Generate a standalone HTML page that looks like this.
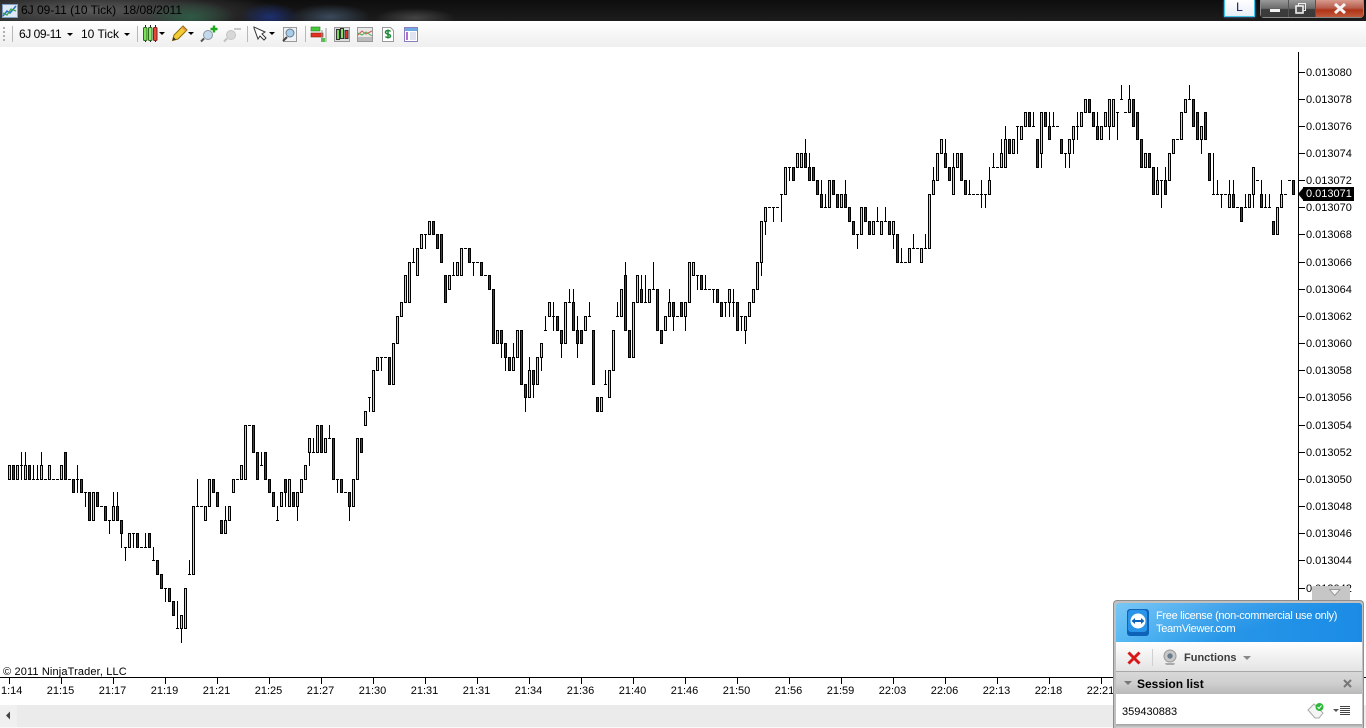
<!DOCTYPE html>
<html><head><meta charset="utf-8"><title>6J 09-11 (10 Tick)</title>
<style>
html,body{margin:0;padding:0;width:1366px;height:728px;overflow:hidden;background:#fff;font-family:"Liberation Sans",sans-serif;color:#000}
.a{position:absolute;white-space:nowrap}
#title{left:0;top:0;width:1366px;height:21px;background:
radial-gradient(ellipse 45px 16px at 190px 17px,#2f5a45 0,rgba(47,90,69,0) 100%),
radial-gradient(ellipse 30px 14px at 270px 17px,#1d2f70 0,rgba(29,47,112,0) 100%),
radial-gradient(ellipse 40px 13px at 330px 17px,#3a4a5c 0,rgba(58,74,92,0) 100%),
radial-gradient(ellipse 40px 10px at 415px 18px,#444 0,rgba(68,68,68,0) 100%),
radial-gradient(ellipse 190px 24px at 90px 10px,#5a5a5a 0,rgba(90,90,90,0) 100%),
linear-gradient(#0e0e0e,#1c1c1c)}
#tb{left:0;top:22px;width:1366px;height:25px;background:linear-gradient(#ffffff,#f6f6f6 50%,#efefef)}
.t12{font-size:12px;line-height:14px}
.t11{font-size:11px;line-height:13px}
.sep{position:absolute;top:26px;width:1px;height:16px;background:#b8b8b8}
.ar{position:absolute;width:0;height:0;border-left:3px solid transparent;border-right:3px solid transparent;border-top:3px solid #000}
</style></head><body>
<div class="a" id="title"></div>
<div class="a" style="left:0;top:21px;width:1366px;height:1px;background:#fff"></div>
<svg class="a" style="left:2px;top:4px" width="17" height="15" viewBox="0 0 17 15"><rect x=".5" y=".5" width="15" height="13" fill="#dfe9f5" stroke="#7f9dc0"/><path d="M1 12 5 7 8 9 14 2" fill="none" stroke="#2a6fd0" stroke-width="1.5"/><path d="M1 9 5 11 9 5 14 7" fill="none" stroke="#3aa84a" stroke-width="1.3"/></svg>
<div class="a t12" style="left:21px;top:3px;color:#000">6J 09-11 (10 Tick)&nbsp; 18/08/2011</div>

<div class="a" style="left:1224px;top:0;width:31px;height:17px;box-sizing:border-box;background:linear-gradient(#fff,#e8eef6);border:1px solid #3fc4e8;border-top:0;box-shadow:0 0 2px #7a8ad8;text-align:center;font-size:12px;line-height:15px;color:#101060">L</div>
<div class="a" style="left:1260px;top:0;width:104px;height:18px;box-sizing:border-box;border:1px solid #8a8a8a;border-top:0;border-radius:0 0 4px 4px;background:#555"></div>
<div class="a" style="left:1261px;top:0;width:27px;height:17px;background:linear-gradient(#9a9a9a,#6a6a6a 50%,#3c3c3c 55%,#3a3a3a)"></div>
<div class="a" style="left:1289px;top:0;width:26px;height:17px;background:linear-gradient(#9a9a9a,#6a6a6a 50%,#3c3c3c 55%,#3a3a3a)"></div>
<div class="a" style="left:1316px;top:0;width:47px;height:17px;background:linear-gradient(#d89a8c,#b86050 45%,#b03418 60%,#c05a3c)"></div>
<div class="a" style="left:1270px;top:9px;width:10px;height:3px;background:#f2f2f2"></div>
<svg class="a" style="left:1295px;top:3px" width="13" height="11" viewBox="0 0 13 11"><rect x="3.5" y=".5" width="7" height="7" fill="none" stroke="#eee"/><rect x="1" y="3" width="7" height="7" fill="#555" stroke="#eee" stroke-width="1.6"/></svg>
<svg class="a" style="left:1333px;top:3px" width="14" height="11" viewBox="0 0 14 11"><path d="M2 1 12 10M12 1 2 10" stroke="#f4f4f4" stroke-width="3" fill="none"/></svg>

<div class="a" id="tb"></div>
<div class="a" style="left:3px;top:27px;width:2px;height:14px;background:repeating-linear-gradient(#b0b0b0 0 2px,transparent 2px 4px)"></div>
<div class="sep" style="left:12px"></div>
<div class="a t12" style="left:19px;top:27px;letter-spacing:-.45px">6J 09-11</div><div class="ar" style="left:67px;top:33px"></div>
<div class="a t12" style="left:81px;top:27px">10 Tick</div><div class="ar" style="left:124px;top:33px"></div>
<div class="sep" style="left:137px"></div>
<div class="sep" style="left:247px"></div>
<div class="sep" style="left:305px"></div>
<svg class="a" style="left:0;top:22px" width="430" height="24" viewBox="0 22 430 24">
<path d="M145.500 25v17M150.500 25v17M155.500 25v17" stroke="#222"/>
<rect x="143.500" y="27.500" width="3.500" height="13" rx="1" fill="#7ee05a" stroke="#2a6a20"/><rect x="148.500" y="27.500" width="3.500" height="13" rx="1" fill="#90e868" stroke="#2a6a20"/><rect x="153.500" y="27.500" width="3.500" height="13" rx="1" fill="#e84838" stroke="#7a2018"/>
<path d="M159 32h6l-3 3z" fill="#000"/>
<path d="M172.500 40.500l1.500-5.500 9-9 4 4-9 9z" fill="#f4cc30" stroke="#8a6a10"/><path d="M172.500 40.500l1-3.500 2.500 2.500z" fill="#333"/><path d="M182 27l4 4" stroke="#e89050" stroke-width="1.500"/>
<path d="M188 32h6l-3 3z" fill="#000"/>
<circle cx="208" cy="35" r="4.500" fill="#c4d8ec" stroke="#8a96a4"/><path d="M204 38.500l-3 3" stroke="#555" stroke-width="2"/><path d="M210.500 29h7M214 25.500v7" stroke="#1ea81e" stroke-width="2.400"/>
<circle cx="231" cy="35" r="4.500" fill="#d8d8d8" stroke="#c4c4c4"/><path d="M227 38.500l-3 3" stroke="#c0c0c0" stroke-width="2"/><path d="M234 29h7" stroke="#c8c8c8" stroke-width="2"/>
<path d="M254 27v1l4 11 2-3 4 4 2-2-4-4 3-2z" fill="#fff" stroke="#333"/>
<path d="M269 32h6l-3 3z" fill="#000"/>
<rect x="283.500" y="27.500" width="13" height="14" fill="#eef2f6" stroke="#9a9a9a"/><circle cx="290" cy="33" r="4" fill="#a8cdea" stroke="#6a7a8a"/><path d="M287 37l-4 4" stroke="#444" stroke-width="2"/>
<rect x="311" y="27" width="9" height="4" fill="#46c83a" stroke="#2a7a20" stroke-width=".6"/><rect x="311" y="33" width="12" height="4" fill="#e03020" stroke="#8a2010" stroke-width=".6"/><rect x="321" y="38" width="4" height="4" fill="#46c83a"/><path d="M322 30v12M326 28v14" stroke="#999"/>
<rect x="334.500" y="27.500" width="15" height="14" fill="#ddd" stroke="#999"/><rect x="336.500" y="29.500" width="3" height="10" fill="#78d85c" stroke="#333"/><rect x="340.500" y="28.500" width="3" height="10" fill="#88e068" stroke="#333"/><rect x="345" y="30.500" width="3" height="8" fill="#e03828" stroke="#333"/>
<rect x="357.500" y="27.500" width="15" height="14" fill="#e8e8e8" stroke="#999"/><path d="M358 37h14v4h-14z" fill="#bbb"/><path d="M358 35l4-4 4 3 6-3" fill="none" stroke="#e05050"/><path d="M358 33l4 2 4-3 6 4" fill="none" stroke="#50b050"/>
<path d="M382.500 27.500h8l3 3v11h-11z" fill="#fff" stroke="#999"/><path d="M390.500 31.500c-1-1.500-5-1.500-5 .7 0 2.500 5 1.300 5 3.800 0 2-4 2-5 .5M388 29.500v9" fill="none" stroke="#1e8a3a" stroke-width="1.500"/>
<rect x="404.500" y="27.500" width="13" height="14" fill="#fff" stroke="#8a80c0"/><rect x="405" y="28" width="12" height="3" fill="#70a8e0"/><rect x="406" y="32" width="2" height="8" fill="#b070d0"/><path d="M410 33h6M410 35h6M410 37h6M410 39h6" stroke="#c0c8e0"/>
</svg>

<svg class="a" id="ch" style="left:0;top:46px" width="1366" height="660" viewBox="0 46 1366 660" shape-rendering="crispEdges"></svg>

<div class="a t11" style="left:3px;top:666px;letter-spacing:.14px">© 2011 NinjaTrader, LLC</div>
<div id="lbl"></div>

<div class="a" style="left:1303px;top:187px;width:51px;height:14px;background:#000;color:#fff;font-size:11px;line-height:15px;padding-left:3px;box-sizing:border-box">0.013071</div>
<svg class="a" style="left:1298px;top:187px" width="6" height="14"><path d="M6 0V14L0 7z" fill="#000"/></svg>

<div class="a" style="left:0;top:705px;width:1366px;height:22px;background:#ebebeb"></div>
<div class="a" style="left:0;top:727px;width:1366px;height:1px;background:#f8f8f8"></div>
<div class="a" style="left:0;top:705px;width:17px;height:22px;background:#f0f0f0"></div>
<svg class="a" style="left:5px;top:711px" width="6" height="9"><path d="M5 .5V8.500L1 4.500z" fill="#444"/></svg>

<div class="a" style="left:1312px;top:586px;width:38px;height:15px;background:#c6c6c6;border-radius:2px 2px 0 0"></div>
<svg class="a" style="left:1329px;top:589px" width="12" height="8"><path d="M.5 .5H11L5.700 6.500z" fill="#f4f4f4" stroke="#9a9a9a"/></svg>

<div class="a" style="left:1113px;top:600px;width:251px;height:128px;box-sizing:border-box;background:#c0c0c0;border:1px solid #8e8e8e;border-bottom:0;border-radius:4px 4px 0 0"></div>
<div class="a" style="left:1116px;top:603px;width:246px;height:39px;border-radius:3px 3px 0 0;background:
linear-gradient(165deg,rgba(255,255,255,.28) 0,rgba(255,255,255,.06) 45%,rgba(255,255,255,0) 60%),linear-gradient(90deg,#45b2f2,#2796e8 45%,#1b8ce6)"></div>
<svg class="a" style="left:1126px;top:608px" width="24" height="29" viewBox="0 0 24 29"><rect x="1" y="1" width="22" height="27" rx="3" fill="#0e62b8"/><rect x="2" y="2" width="19" height="22" rx="3" fill="#2a94e8"/><circle cx="12" cy="13" r="7.500" fill="#fff"/><path d="M5.500 13l3.500-3v2h6v-2l3.500 3-3.500 3v-2H9v2z" fill="#0e62b8"/></svg>
<div class="a" style="left:1156px;top:610px;font-size:11px;line-height:13px;color:#fff;letter-spacing:-.3px">Free license (non-commercial use only)<br>TeamViewer.com</div>
<div class="a" style="left:1116px;top:642px;width:246px;height:29px;background:linear-gradient(#fff,#f4f4f4 40%,#e4e4e4)"></div>
<div class="a" style="left:1116px;top:671px;width:246px;height:1px;background:#a8a8a8"></div>
<svg class="a" style="left:1127px;top:651px" width="14" height="14"><path d="M1.500 1.500 12.500 12.500M12.500 1.500 1.500 12.500" stroke="#d81818" stroke-width="3"/></svg>
<div class="a" style="left:1152px;top:649px;width:1px;height:17px;background:#d0d0d0"></div>
<svg class="a" style="left:1163px;top:649px" width="14" height="16"><circle cx="7" cy="7" r="6" fill="#c8c8c8" stroke="#999"/><circle cx="7" cy="7" r="2.700" fill="#6a7a8a"/><path d="M2 14h10l-1 2H3z" fill="#aaa"/></svg>
<div class="a" style="left:1184px;top:652px;font-size:11px;line-height:13px;font-weight:bold;color:#3c3c3c">Functions</div>
<div class="ar" style="left:1243px;top:656px;border-top:4px solid #888;border-left-width:4px;border-right-width:4px"></div>
<div class="a" style="left:1116px;top:672px;width:246px;height:22px;background:linear-gradient(#d8d8d8,#cfcfcf 50%,#b9b9b9)"></div>
<div class="ar" style="left:1124px;top:681px;border-top:4px solid #777;border-left-width:4px;border-right-width:4px"></div>
<div class="a" style="left:1137px;top:677px;font-size:12px;line-height:14px;font-weight:bold;color:#000">Session list</div>
<svg class="a" style="left:1343px;top:679px" width="9" height="9"><path d="M1 1 8 8M8 1 1 8" stroke="#777" stroke-width="2"/></svg>
<div class="a" style="left:1116px;top:694px;width:246px;height:30px;background:#fff"></div>
<div class="a" style="left:1116px;top:724px;width:246px;height:4px;background:linear-gradient(#a0a0a0,#d4d4d4)"></div>
<div class="a" style="left:1122px;top:706px;font-size:11px;line-height:13px;color:#000">359430883</div>
<svg class="a" style="left:1307px;top:702px" width="18" height="18"><path d="M1 8l6-6 9 9-4 5H8z" fill="#f4f4f4" stroke="#aaa"/><circle cx="12.500" cy="5" r="4" fill="#2eb83a"/><path d="M10.500 5l1.500 1.500 2.500-3" stroke="#fff" fill="none"/></svg>
<svg class="a" style="left:1333px;top:705px" width="18" height="12"><path d="M0 4h6L3 7z" fill="#555"/><path d="M7 1.500h10M7 3.500h10M7 5.500h10M7 7.500h10M7 9.500h10" stroke="#444"/></svg>

<script>
var D="g29-30 r29-30 g29-30 d29^28_30 g29-30^28 r29-30 d30^29 d30^29 g29-30^28 d30 g29-30 d30 d30 g29-30 r28-30 d30 r30-31 d30^29_31 r30-31 d31_32 r31-33 g31-33 r31-32 d32 r32-33 d33_34 g32-33^31 r32-33^31 r33-34_35 d35_36 g34-35 d34_35 r34-35 d35 d35^34 r34-35 d36^35 r36-37 r37-38 d38_39 r38-39 r39-40 d41^39 g40-41_42 g38-41 d37^36 g32-37 d32^30 d32 "+
"g32-33 g30-32 r30-31 r31-32 r33-34 g33-34^32 g32-33 g30-31 d30 g29-30 g26-30 d26 r26-28 r28-30 d29^28 r28-30 r30-31 r31-32 d33^32 g31-32 r30-31_32 g30-32 r31-32 g31-32_33 g30-31 g29-30 g27-28_29 d28^27 g26-28 r26-28 g27-28 d27^26 r27-30 d30_31 r30-31 d31 r31-32_33 g30-32 g27-30 r27-28 g25-26 d24_25 g22-25 "+
"g21-22 d21_22 d21 r21-23 g20-23 g18-20 g17-18 g15-17 g14-17 d14^13 g13-15 g12-13 d12_13 g11-12 r11-12 r12-13 r12-14 r15-17 g15-16 d15^14 g14-15 g13-15 d13 r13-14 d14_15 d14 r14-15 d15 r15-16 r16-20 g19-20 r19-20_21 r20-21_22 r21-22 g21-22^20 g19-21 r19-23 r23-24_25 g22-24^21 r22-23_24 g21-23 g20-21_22 d19^18 g17-18 d18^17_19 r18-19 "+
"r19-20_21 g17-20 d17^16 r17-19^16 r19-20^18_21 r19-20 g18-19 d18^17 r19-23 r24-25 g24-25 d23^22 g22-24 g19-22 d18^17 g16-18 r15-19^14 r19-21 g17-21 g15-17 r16-17^15 d17^15 g16-17 d16^14 r16-19 r19-20 g18-19 g17-18^16 r17-18_19 d18 r17-18 g17-18_19 g14-17 g14-15 d15_16 r15-16 d16^15 d16 d16_17 r16-17 r17-18 d17_18 g16-17_18 d17^16_18 r17-19 d18_19 g18-19_20 g17-18 g16-17 g14-16 g11-14_15 "+
"g10-11_12 d10 d10_11 d10 d9_11 g7-9 d7_8 r7-8 g6-7 g6-7 r6-7^5 r7-8^6 r7-8 r8-9 r9-10^8 d10^9 g8-10 r8-9 r9-10 g9-10 r9-10^8 r10-11 r11-12 d12_13 g10-12 r10-11 r11-12 g11-12 d11^10 g11-12 d11^10 r11-12 g11-12_13 r12-14 d14^13 d14 g13-14 d13^12 d13 g13-14 d13^12 g9-13 g8-9^7 g6-8 g5-6 r6-7^5 r7-8 "+
"g7-9^6 g6-7 r6-8 r8-9 d9^8 d9 d9 d9^8_10 d9_10 g8-9^7 d7^6 d7 g6-7^5 g5-7^4 r5-6 g5-6 d4_6 g4-5 g3-4 r3-4 d4^3 r5-7 g3-6_7 r3-4 r4-5^3 d4^3 d4 r5-6 d6_7 g5-6_7 g4-5_6 d4^3_5 g3-4 g2-3 r2-3 r3-4 r4-5^3 g4-5 g3-4 g2-4_5 g2-4 d3_5 d2^1 d3 g2-3^1 "+
"r2-4 r3-5 r5-7 g6-7 r6-7 r7-9 g8-9^7 d8_10 r8-9^7 g6-8 g5-6 d5 g3-5 g2-3 d2^1 r2-4 r3-5 g4-5_6 r3-5 r6-8 d9^6 d9^8 d9_10 d9 g9-10^8 r9-10^8 d10 r10-11 d10^9 g9-10 g7-9_10 d8 r9-10^8 d10^9 d10^9 r11-12 g10-12 g9-10^8 d9 d8 r8-9";
function Y(n){return Math.floor(72+13.58*n)}
var s="",re=/([grd])(\d+)(?:-(\d+))?(?:\^(\d+))?(?:_(\d+))?/;
function R(x,y,w,h,f){return '<rect x="'+x+'" y="'+y+'" width="'+w+'" height="'+h+'" fill="'+f+'"/>'}
D.split(/\s+/).forEach(function(t,i){
 var m=re.exec(t);if(!m)return;
 var x=8+4*i,a=+m[2],b=m[3]?+m[3]:a,hi=m[4]?+m[4]:a,lo=m[5]?+m[5]:b;
 if(hi!=lo)s+=R(x+1,Y(hi),1,Y(lo)-Y(hi)+1,"#000");
 if(m[1]=="d"){s+=R(x,Y(a),3,1,"#000");}
 else{var ya=Y(a),yb=Y(b);
  s+=R(x,ya,3,yb-ya+1,"#000");
  s+=R(x+1,ya+1,1,yb-ya-1,m[1]=="g"?"#a8e8a0":"#d80000");}
});
/* price axis */
s+=R(1298,52,1,548,"#000");
var h="";
for(var n=0;n<=38;n+=2){var y=Y(n);s+=R(1298,y,7,1,"#000");
 h+='<div class="a t11" style="left:1306px;top:'+(y-5)+'px">0.0130'+(80-n)+'</div>';}
/* time axis */
s+=R(0,677,1366,1,"#000");
var L=["1:14","21:15","21:17","21:19","21:21","21:25","21:27","21:30","21:31","21:31","21:34","21:36","21:40","21:46","21:50","21:56","21:59","22:03","22:06","22:13","22:18","22:21"];
L.forEach(function(l,k){var x=9+52*k;s+=R(x,677,1,7,"#000");
 if(k==0)h+='<div class="a t11" style="left:1px;top:685px">'+l+'</div>';
 else h+='<div class="a t11" style="left:'+(x-21)+'px;width:41px;text-align:center;top:685px">'+l+'</div>';});
document.getElementById("ch").innerHTML=s;
document.getElementById("lbl").innerHTML=h;
</script>
</body></html>
